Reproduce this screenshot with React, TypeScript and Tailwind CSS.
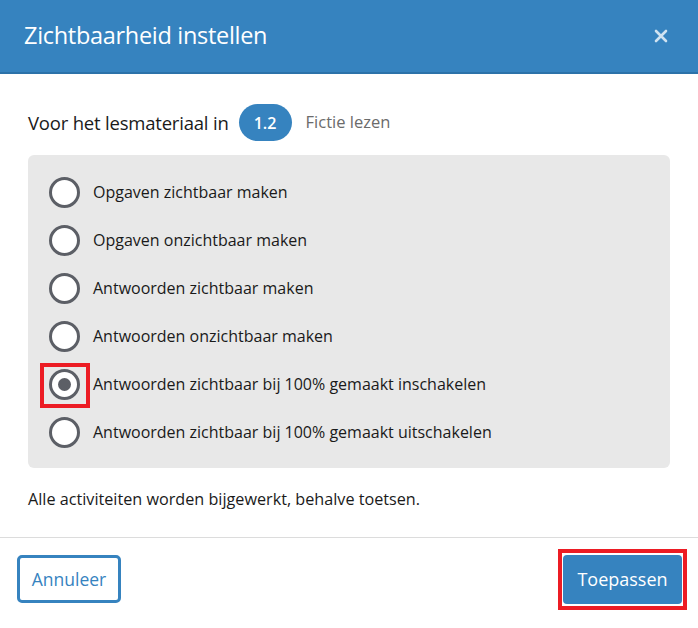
import { useState } from "react";

const options = [
  "Opgaven zichtbaar maken",
  "Opgaven onzichtbaar maken",
  "Antwoorden zichtbaar maken",
  "Antwoorden onzichtbaar maken",
  "Antwoorden zichtbaar bij 100% gemaakt inschakelen",
  "Antwoorden zichtbaar bij 100% gemaakt uitschakelen",
];

export default function App() {
  const [selected, setSelected] = useState(4);

  return (
    <div className="w-[698px] h-[628px] bg-white flex flex-col text-[#1a1a1a] font-['Open_Sans','Noto_Sans',sans-serif]">
      {/* Header */}
      <div className="h-[74px] shrink-0 bg-[#3683bf] border-b-2 border-[#2c72a9] flex items-center justify-between pl-6 pr-[30px]">
        <h2 className="text-[23.5px] text-white tracking-[-0.3px]">Zichtbaarheid instellen</h2>
        <svg width="14" height="14" viewBox="0 0 14 14" className="text-[#cfe2f1]">
          <path d="M2 2 L12 12 M12 2 L2 12" stroke="currentColor" strokeWidth="2.6" strokeLinecap="round" />
        </svg>
      </div>

      {/* Body */}
      <div className="flex-1 px-7 pt-[30px]">
        <div className="flex items-center h-[37px] text-[18.5px]">
          <span className="tracking-[-0.2px]">Voor het lesmateriaal in</span>
          <span className="ml-[10px] w-[53px] h-[37px] rounded-full bg-[#3683bf] text-white text-[16px] font-semibold flex items-center justify-center">
            1.2
          </span>
          <span className="ml-[14px] text-[16.5px] text-[#6b6b6b]">Fictie lezen</span>
        </div>

        <div className="mt-[14px] w-[642px] rounded-[6px] bg-[#e8e8e8] pl-[21px] pt-[13px] pb-3">
          {options.map((label, i) => (
            <label key={label} className="h-12 flex items-center cursor-pointer" onClick={() => setSelected(i)}>
              <span className="relative w-[31px] h-[31px] rounded-full border-[3px] border-[#5c5f66] bg-white flex items-center justify-center shrink-0">
                {selected === i && <span className="w-[13px] h-[13px] rounded-full bg-[#5c5f66]" />}
                {i === 4 && (
                  <span className="absolute left-[-12px] top-[-9px] w-[50px] h-[45px] border-4 border-[#ec1c24]" />
                )}
              </span>
              <span className="ml-[13px] text-[16px]">{label}</span>
            </label>
          ))}
        </div>

        <p className="mt-[19px] text-[16.2px]">Alle activiteiten worden bijgewerkt, behalve toetsen.</p>
      </div>

      {/* Footer */}
      <div className="h-[91px] shrink-0 border-t border-[#dcdcdc] flex items-start justify-between pl-[17px] pr-4 pt-[17px]">
        <button className="w-[104px] h-12 rounded-[5px] border-[3px] border-[#3683bf] bg-white text-[#3683bf] text-[17.5px]">
          Annuleer
        </button>
        <span className="relative">
          <button className="w-[119px] h-[49px] rounded-[4px] bg-[#3683bf] text-white text-[18px]">
            Toepassen
          </button>
          <span className="absolute -left-[5px] -top-[6px] -right-[5px] -bottom-[6px] border-4 border-[#ec1c24]" />
        </span>
      </div>
    </div>
  );
}
